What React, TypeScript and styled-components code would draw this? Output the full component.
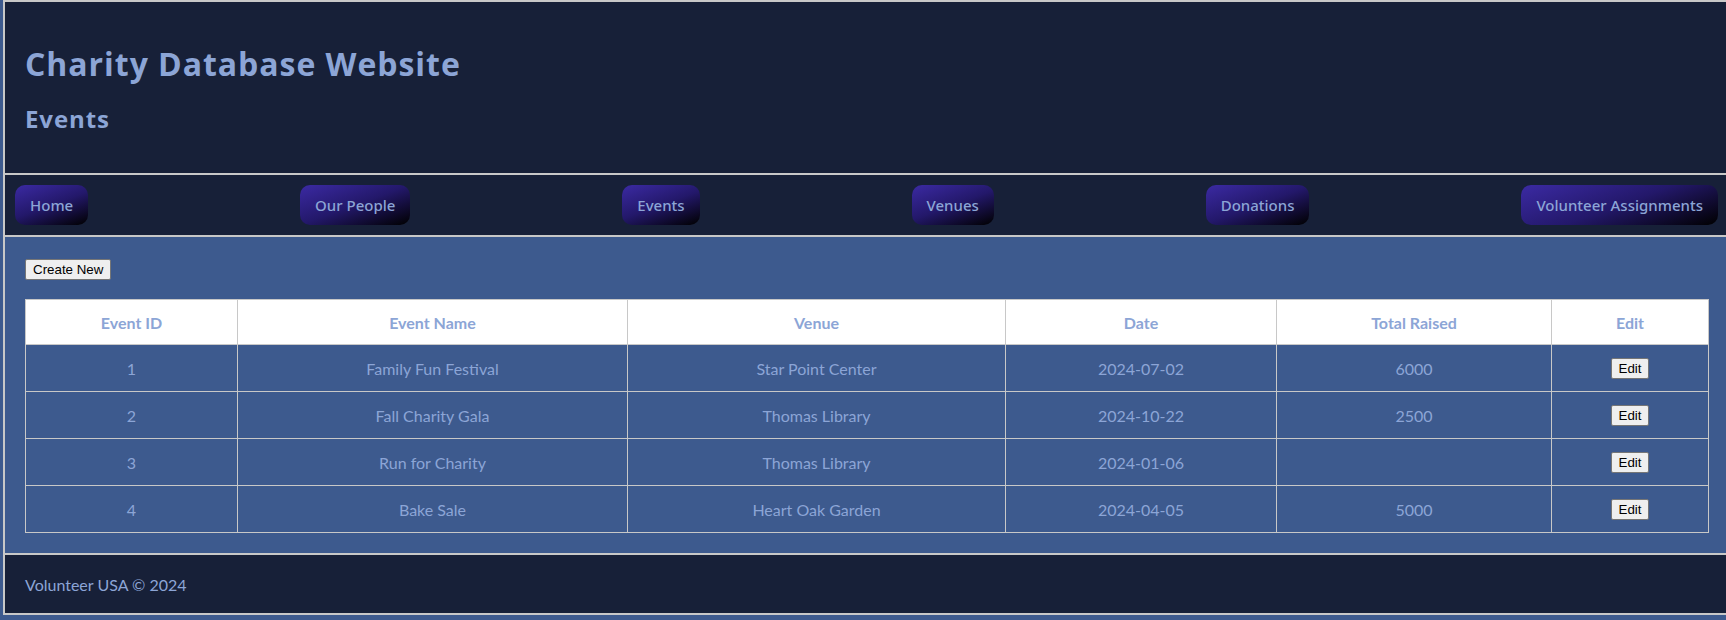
import React from "react";
import styled, { createGlobalStyle } from "styled-components";

const Global = createGlobalStyle`
  html, body {
    margin: 0;
    padding: 0;
    background: #3d5a8e;
    overflow: hidden;
  }
  body {
    padding-left: 3px;
    font-family: "Lato", "Open Sans", sans-serif;
  }
`;

const Page = styled.div`
  width: 1727px;
  box-sizing: border-box;
  border: 2px solid #c8c8c8;
  background: #3d5a8e;
`;

const Header = styled.header`
  background: #172038;
  border-bottom: 2px solid #c8c8c8;
  display: flex;
  flex-direction: column;
  gap: 17px;
  padding: 40px 20px 38px;
`;

const Title = styled.h1`
  margin: 0;
  font-family: "Open Sans", sans-serif;
  font-weight: 700;
  font-size: 32px;
  color: #8ca5d6;
  letter-spacing: 0.95px;
`;

const Subtitle = styled.h2`
  margin: 0;
  font-family: "Open Sans", sans-serif;
  font-weight: 700;
  font-size: 24px;
  color: #8ca5d6;
  letter-spacing: 0.9px;
`;

const Nav = styled.nav`
  background: #172038;
  border-bottom: 2px solid #c8c8c8;
  display: flex;
  justify-content: space-between;
  align-items: center;
  padding: 10px;
`;

const NavButton = styled.a`
  display: flex;
  align-items: center;
  height: 40px;
  padding: 0 15px;
  border-radius: 10px;
  background: linear-gradient(160deg, #3b2aa3 0%, #23186a 50%, #000000 100%);
  color: #8ca5d6;
  font-family: "Noto Sans", "Open Sans", sans-serif;
  font-weight: 500;
  font-size: 15px;
  text-decoration: none;
  white-space: nowrap;
`;

const Main = styled.main`
  background: #3d5a8e;
  border-bottom: 2px solid #c8c8c8;
  padding: 22px 20px 20px;
  display: flex;
  flex-direction: column;
  align-items: flex-start;
  gap: 19px;
`;

const PlainButton = styled.button`
  font-family: "Liberation Sans", Arial, sans-serif;
  font-size: 13.33px;
  color: #000;
  background: #efefef;
  border: 1px solid #767676;
  border-radius: 2px;
  padding: 2px 7px;
  line-height: 15px;
  cursor: pointer;
`;

const Table = styled.table`
  width: 100%;
  border-collapse: collapse;
  table-layout: fixed;
  border: 1px solid #c8c8c8;
`;

const Th = styled.th`
  background: #ffffff;
  color: #8ca5d6;
  font-family: "Lato", sans-serif;
  font-weight: 700;
  font-size: 16px;
  height: 44px;
  padding: 0 10px;
  border: 1px solid #c8c8c8;
  text-align: center;
`;

const Td = styled.td`
  color: #8ca5d6;
  font-family: "Lato", sans-serif;
  font-size: 16px;
  height: 46px;
  padding: 0 10px;
  border: 1px solid #c8c8c8;
  text-align: center;
`;

const Footer = styled.footer`
  background: #172038;
  height: 58px;
  padding: 0 20px;
  display: flex;
  align-items: center;
  color: #8ca5d6;
  font-family: "Lato", sans-serif;
  font-size: 16px;
`;

const navItems = ["Home", "Our People", "Events", "Venues", "Donations", "Volunteer Assignments"];
const colWidths = [212, 390, 378, 271, 275, 157];
const headers = ["Event ID", "Event Name", "Venue", "Date", "Total Raised", "Edit"];
const rows = [
  ["1", "Family Fun Festival", "Star Point Center", "2024-07-02", "6000"],
  ["2", "Fall Charity Gala", "Thomas Library", "2024-10-22", "2500"],
  ["3", "Run for Charity", "Thomas Library", "2024-01-06", ""],
  ["4", "Bake Sale", "Heart Oak Garden", "2024-04-05", "5000"],
];

export default function App() {
  return (
    <>
      <Global />
      <Page>
        <Header>
          <Title>Charity Database Website</Title>
          <Subtitle>Events</Subtitle>
        </Header>
        <Nav>
          {navItems.map((n) => (
            <NavButton key={n} href="#">
              {n}
            </NavButton>
          ))}
        </Nav>
        <Main>
          <PlainButton>Create New</PlainButton>
          <Table>
            <colgroup>
              {colWidths.map((w, i) => (
                <col key={i} style={{ width: `${w}px` }} />
              ))}
            </colgroup>
            <thead>
              <tr>
                {headers.map((h) => (
                  <Th key={h}>{h}</Th>
                ))}
              </tr>
            </thead>
            <tbody>
              {rows.map((r) => (
                <tr key={r[0]}>
                  {r.map((c, i) => (
                    <Td key={i}>{c}</Td>
                  ))}
                  <Td>
                    <PlainButton>Edit</PlainButton>
                  </Td>
                </tr>
              ))}
            </tbody>
          </Table>
        </Main>
        <Footer>Volunteer USA © 2024</Footer>
      </Page>
    </>
  );
}
